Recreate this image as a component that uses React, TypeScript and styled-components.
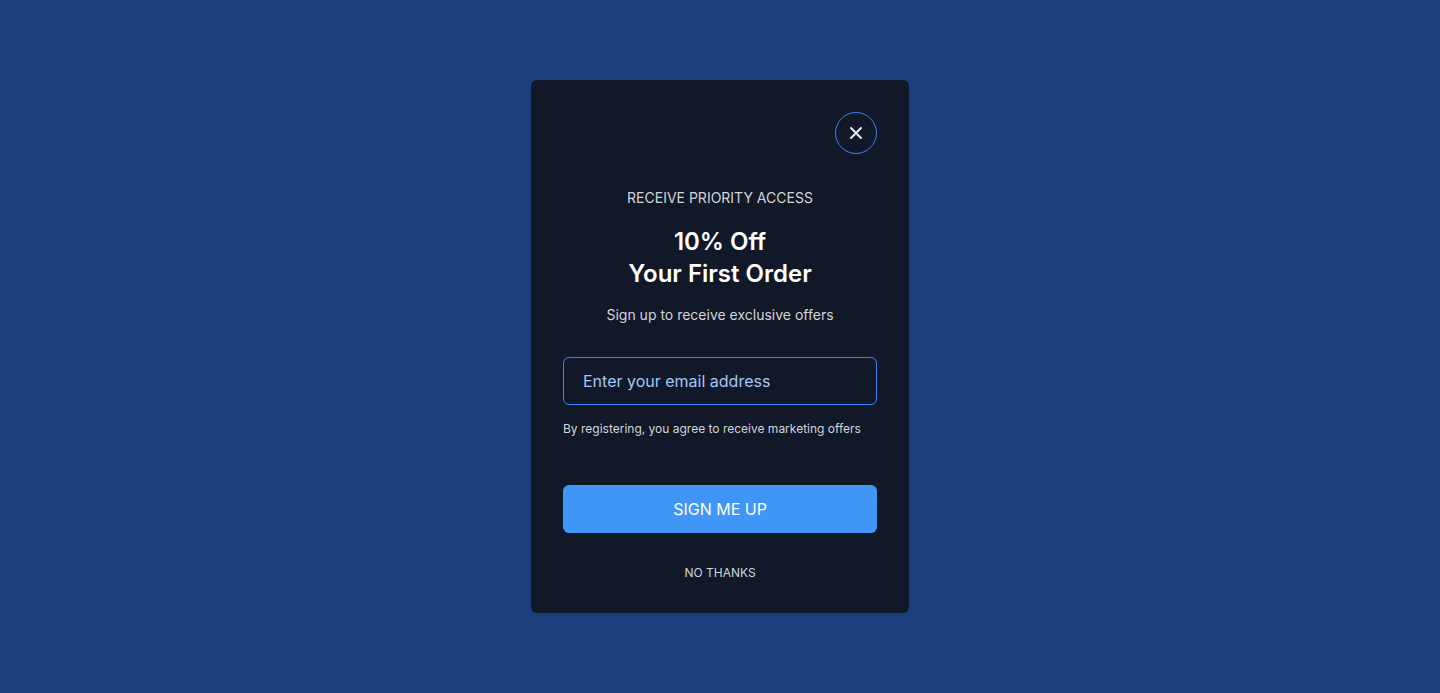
import React from "react"
import styled, { createGlobalStyle } from "styled-components"

const Global = createGlobalStyle`
  html, body {
    margin: 0;
    padding: 0;
    background: #1b3f7d;
    font-family: Inter, "Noto Sans", "Liberation Sans", sans-serif;
  }
  * { box-sizing: border-box; }
`

const Page = styled.div`
  height: 693px;
  display: flex;
  justify-content: center;
  align-items: flex-start;
  padding-top: 80px;
`

const Modal = styled.div`
  width: 378px;
  background: #111827;
  border-radius: 6px;
  padding: 32px;
  display: flex;
  flex-direction: column;
  align-items: center;
`

const TopRow = styled.div`
  width: 100%;
  display: flex;
  justify-content: flex-end;
`

const CloseButton = styled.button`
  width: 42px;
  height: 42px;
  border-radius: 50%;
  border: 1px solid #3b82f6;
  background: transparent;
  color: #e5edf7;
  display: flex;
  align-items: center;
  justify-content: center;
  padding: 0;
  cursor: pointer;
`

const Eyebrow = styled.div`
  margin-top: 34px;
  font-size: 14px;
  line-height: 20px;
  color: #d1d5db;
  text-transform: uppercase;
`

const Heading = styled.h2`
  margin: 18px 0 0;
  font-size: 24px;
  line-height: 32px;
  font-weight: 600;
  color: #ffffff;
  text-align: center;
`

const Sub = styled.p`
  margin: 15px 0 0;
  font-size: 14px;
  line-height: 20px;
  color: #d1d5db;
`

const EmailInput = styled.input`
  margin-top: 32px;
  width: 100%;
  height: 48px;
  border: 1px solid #3b82f6;
  border-radius: 6px;
  background: transparent;
  padding: 0 19px;
  font-family: inherit;
  font-size: 16px;
  color: #fff;
  outline: none;
  &::placeholder { color: #a4c8f5; }
`

const Note = styled.p`
  margin: 16px 0 0;
  width: 100%;
  font-size: 12px;
  line-height: 16px;
  color: #d1d5db;
`

const Primary = styled.button`
  margin-top: 48px;
  width: 100%;
  height: 48px;
  border: none;
  border-radius: 6px;
  background: #4096f7;
  color: #fff;
  font-family: inherit;
  font-size: 16px;
  text-transform: uppercase;
  cursor: pointer;
`

const Dismiss = styled.button`
  margin-top: 32px;
  border: none;
  background: none;
  padding: 0;
  font-family: inherit;
  font-size: 12px;
  line-height: 16px;
  color: #d1d5db;
  text-transform: uppercase;
  cursor: pointer;
`

export default function App() {
  return (
    <>
      <Global />
      <Page>
        <Modal>
          <TopRow>
            <CloseButton aria-label="Close">
              <svg width="14" height="14" viewBox="0 0 14 14" fill="none" stroke="currentColor" strokeWidth="2" strokeLinecap="round">
                <path d="M2 2l10 10M12 2L2 12" />
              </svg>
            </CloseButton>
          </TopRow>
          <Eyebrow>Receive priority access</Eyebrow>
          <Heading>10% Off<br />Your First Order</Heading>
          <Sub>Sign up to receive exclusive offers</Sub>
          <EmailInput type="email" placeholder="Enter your email address" />
          <Note>By registering, you agree to receive marketing offers</Note>
          <Primary>Sign me up</Primary>
          <Dismiss>No thanks</Dismiss>
        </Modal>
      </Page>
    </>
  )
}
